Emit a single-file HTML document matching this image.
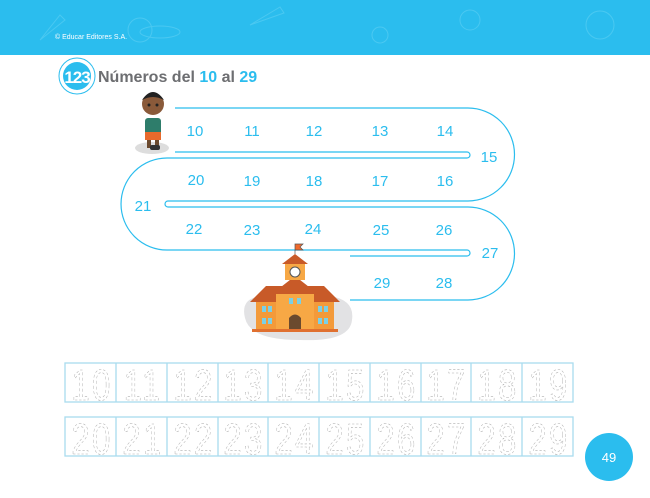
<!DOCTYPE html>
<html><head><meta charset="utf-8"><style>
body{margin:0;width:650px;height:498px;overflow:hidden;background:#fff;font-family:"Liberation Sans",sans-serif;position:relative}
.hdr{position:absolute;left:0;top:0;width:650px;height:55px;background:#2bbdee}
.cp{position:absolute;left:55px;top:34px;color:#fff;font-size:7px}
</style></head><body>
<div class="hdr"></div>
<div class="cp">© Educar Editores S.A.</div>
<svg width="650" height="498" style="position:absolute;left:0;top:0">
<g fill="none" stroke="#5fd0f4" stroke-width="1" opacity="0.6">
<circle cx="140" cy="30" r="12"/><ellipse cx="160" cy="32" rx="20" ry="6"/>
<circle cx="470" cy="20" r="10"/><path d="M40 40 l20 -25 l5 5 z"/><path d="M250 25 l30 -18 l4 6z"/>
<circle cx="600" cy="25" r="14"/><circle cx="380" cy="35" r="8"/>
</g>
<circle cx="77" cy="76" r="18" fill="none" stroke="#2bbdee" stroke-width="1"/>
<circle cx="77" cy="76" r="14" fill="#2bbdee"/>
<text x="77" y="83" font-size="17" fill="#fff" text-anchor="middle" font-weight="bold" letter-spacing="-1">123</text>
<text x="98" y="82" font-size="16" font-weight="bold" fill="#6d6e71">Números del <tspan fill="#2bbdee">10</tspan> al <tspan fill="#2bbdee">29</tspan></text>
<g fill="none" stroke="#2bbdee" stroke-width="1.2">
<path d="M175,108 H468 A46.5,46.5 0 0 1 468,201 H168 A3,3 0 0 0 168,207 H468 A46.5,46.5 0 0 1 468,300 H350"/>
<path d="M175,152 H467 A3,3 0 0 1 467,158 H167 A46,46 0 0 0 167,250 H467 A3,3 0 0 1 467,256 H350"/>
</g>
<g font-size="15" fill="#2bbdee" text-anchor="middle">
<text x="195" y="136">10</text><text x="252" y="136">11</text><text x="314" y="136">12</text><text x="380" y="136">13</text><text x="445" y="136">14</text>
<text x="489" y="162">15</text>
<text x="196" y="185">20</text><text x="252" y="186">19</text><text x="314" y="186">18</text><text x="380" y="186">17</text><text x="445" y="186">16</text>
<text x="143" y="211">21</text>
<text x="194" y="234">22</text><text x="252" y="235">23</text><text x="313" y="234">24</text><text x="381" y="235">25</text><text x="444" y="235">26</text>
<text x="490" y="258">27</text>
<text x="382" y="288">29</text><text x="444" y="288">28</text>
</g>
<ellipse cx="152" cy="148" rx="17" ry="6" fill="#ddd"/>
<rect x="145" y="118" width="16" height="18" rx="3" fill="#2e7d6b"/>
<rect x="145" y="132" width="16" height="8" fill="#e86a2c"/>
<rect x="147" y="140" width="4" height="8" fill="#6b4a2e"/><rect x="155" y="140" width="4" height="8" fill="#6b4a2e"/>
<rect x="150" y="145" width="10" height="5" rx="2" fill="#333"/>
<circle cx="153" cy="104" r="11" fill="#8a5a3a"/>
<path d="M142 100 Q153 84 164 100 Q153 94 142 100z" fill="#222"/>
<circle cx="149" cy="105" r="1.5" fill="#222"/><circle cx="157" cy="105" r="1.5" fill="#222"/>
<path d="M245 318 Q240 298 262 296 L330 296 Q355 300 352 320 Q350 342 300 340 Q250 340 245 318z" fill="#e2e2e4"/>
<rect x="256" y="300" width="78" height="30" fill="#f39a3a"/>
<path d="M250 302 L266 286 H324 L340 302z" fill="#c85a28"/>
<path d="M276 292 L295 278 L314 292 V330 H276z" fill="#f7a845"/>
<path d="M272 294 L295 276 L318 294z" fill="#c85a28"/>
<rect x="285" y="262" width="20" height="18" fill="#f7a845"/>
<path d="M282 264 L295 254 L308 264z" fill="#c85a28"/>
<circle cx="295" cy="272" r="5" fill="#fff" stroke="#555" stroke-width="1"/>
<path d="M295 254 V244 h8 l-3 3 l3 3 h-8" fill="#f06a2c" stroke="#555" stroke-width=".7"/>
<path d="M289 330 V318 Q295 311 301 318 V330z" fill="#6b4a2e"/>
<g fill="#7ad0e6"><rect x="262" y="306" width="4" height="6"/><rect x="268" y="306" width="4" height="6"/><rect x="262" y="318" width="4" height="6"/><rect x="268" y="318" width="4" height="6"/>
<rect x="318" y="306" width="4" height="6"/><rect x="324" y="306" width="4" height="6"/><rect x="318" y="318" width="4" height="6"/><rect x="324" y="318" width="4" height="6"/>
<rect x="289" y="298" width="4" height="6"/><rect x="297" y="298" width="4" height="6"/></g>
<rect x="252" y="329" width="86" height="3" fill="#e07030"/>
<g fill="none" stroke="#a9dcef" stroke-width="1.3">
<rect x="65" y="363" width="508" height="39"/><rect x="65" y="417" width="508" height="39"/>
<path d="M116 363V402M167 363V402M218 363V402M268 363V402M319 363V402M370 363V402M421 363V402M471 363V402M522 363V402"/>
<path d="M116 417V456M167 417V456M218 417V456M268 417V456M319 417V456M370 417V456M421 417V456M471 417V456M522 417V456"/>
</g>
<g font-size="44" fill="none" stroke="#b0b0b0" stroke-width="0.6" stroke-dasharray="3,2.5" text-anchor="middle" letter-spacing="3">
<g transform="translate(0,0) scale(1,1)">
<text x="92" y="400" transform="translate(92 0) scale(0.75 1) translate(-92 0)">10</text>
<text x="143" y="400" transform="translate(143 0) scale(0.75 1) translate(-143 0)">11</text>
<text x="194" y="400" transform="translate(194 0) scale(0.75 1) translate(-194 0)">12</text>
<text x="244" y="400" transform="translate(244 0) scale(0.75 1) translate(-244 0)">13</text>
<text x="295" y="400" transform="translate(295 0) scale(0.75 1) translate(-295 0)">14</text>
<text x="346" y="400" transform="translate(346 0) scale(0.75 1) translate(-346 0)">15</text>
<text x="397" y="400" transform="translate(397 0) scale(0.75 1) translate(-397 0)">16</text>
<text x="447" y="400" transform="translate(447 0) scale(0.75 1) translate(-447 0)">17</text>
<text x="498" y="400" transform="translate(498 0) scale(0.75 1) translate(-498 0)">18</text>
<text x="549" y="400" transform="translate(549 0) scale(0.75 1) translate(-549 0)">19</text>
<text x="92" y="454" transform="translate(92 0) scale(0.75 1) translate(-92 0)">20</text>
<text x="143" y="454" transform="translate(143 0) scale(0.75 1) translate(-143 0)">21</text>
<text x="194" y="454" transform="translate(194 0) scale(0.75 1) translate(-194 0)">22</text>
<text x="244" y="454" transform="translate(244 0) scale(0.75 1) translate(-244 0)">23</text>
<text x="295" y="454" transform="translate(295 0) scale(0.75 1) translate(-295 0)">24</text>
<text x="346" y="454" transform="translate(346 0) scale(0.75 1) translate(-346 0)">25</text>
<text x="397" y="454" transform="translate(397 0) scale(0.75 1) translate(-397 0)">26</text>
<text x="447" y="454" transform="translate(447 0) scale(0.75 1) translate(-447 0)">27</text>
<text x="498" y="454" transform="translate(498 0) scale(0.75 1) translate(-498 0)">28</text>
<text x="549" y="454" transform="translate(549 0) scale(0.75 1) translate(-549 0)">29</text>
</g></g>
<circle cx="609" cy="457" r="24" fill="#2bbdee"/>
<text x="609" y="462" font-size="13" fill="#fff" text-anchor="middle">49</text>
</svg>
</body></html>
